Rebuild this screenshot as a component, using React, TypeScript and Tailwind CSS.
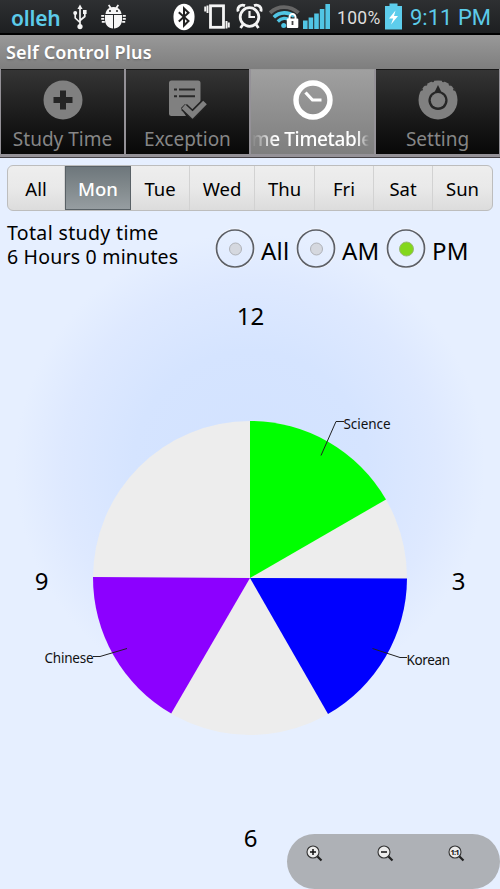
import type { ReactNode } from 'react'
import clsx from 'clsx'

/* ───────── Status bar icons ───────── */

function UsbIcon() {
  return (
    <svg width="14" height="26" viewBox="0 0 14 26" fill="none" stroke="#f4f4f4" strokeWidth="1.7">
      <path d="M7 3v19M2.200 9v5L7 18.500M11.800 8v4.500L7 16.500" />
      <path d="M7 0.500 9.600 5H4.400z" fill="#f4f4f4" stroke="none" />
      <circle cx="7" cy="22.600" r="2.600" fill="#f4f4f4" stroke="none" />
      <circle cx="2.200" cy="9" r="2" fill="#f4f4f4" stroke="none" />
      <path d="M10 6h3.600v4H10z" fill="#f4f4f4" stroke="none" />
    </svg>
  )
}

function DebugIcon() {
  return (
    <svg width="25" height="26" viewBox="0 0 25 26" fill="#f6f6f6">
      <path d="M4.500 10c.2-3 2-5.200 4-6L7 1.200 8.400.4l1.900 2.900a10 10 0 0 1 4.400 0L16.600.4l1.400.8L16.500 4c2 .8 3.800 3 4 6z" />
      <path d="M4 11h8v13.500C7.500 24 4 21 4 16zM13 11h8v5c0 5-3.500 8-8 8.500z" />
      <path d="M.2 11h3v1.800h-3zM.2 14h3v1.800h-3zM.8 17h3v1.800h-3zM21.800 11h3v1.800h-3zM21.800 14h3v1.800h-3zM21.200 17h3v1.800h-3z" />
      <circle cx="9" cy="7" r="1" fill="#222" />
      <circle cx="16" cy="7" r="1" fill="#222" />
    </svg>
  )
}

function BluetoothIcon() {
  return (
    <svg width="22" height="28" viewBox="0 0 22 28">
      <rect x=".5" y=".8" width="21" height="26.400" rx="10.500" ry="12.500" fill="#fff" />
      <path d="M5.800 9.200 15.500 18 11 22.500V5.300l4.500 4.400L5.800 18.600" fill="none" stroke="#222" strokeWidth="2" />
    </svg>
  )
}

function VibrateIcon() {
  return (
    <svg width="26" height="26" viewBox="0 0 26 26" fill="none" stroke="#f4f4f4">
      <rect x="6.500" y="1.800" width="13" height="21.500" strokeWidth="2.800" />
      <path d="M3.500 1.500V9M1.200 2.500v5M22.500 17v7.500M24.800 18.500v5" strokeWidth="1.900" />
    </svg>
  )
}

function AlarmIcon() {
  return (
    <svg width="27" height="27" viewBox="0 0 27 27" fill="none" stroke="#f4f4f4">
      <circle cx="13.500" cy="14" r="9.300" strokeWidth="2.800" />
      <path d="M13.500 8v6h5.500" strokeWidth="2.200" />
      <path d="M2.200 8.500C.8 4.500 4.500.8 9 2.600M24.800 8.500C26.200 4.500 22.500.8 18 2.600" strokeWidth="2.800" />
      <path d="M7 21.500 4.500 25M20 21.500l2.500 3.500" strokeWidth="2.800" />
    </svg>
  )
}

function WifiIcon() {
  return (
    <svg width="31" height="24" viewBox="0 0 31 24" fill="none">
      <path d="M1 7.800C9 .2 21 .2 29.500 7.800" stroke="#666" strokeWidth="3.800" />
      <path d="M4.800 12.200c6-5.600 14.500-5.600 20.500-1" stroke="#51c5e4" strokeWidth="3.600" />
      <path d="M8.800 16.500c4-3.800 8.500-3.800 11-1.800" stroke="#51c5e4" strokeWidth="3.400" />
      <circle cx="14.700" cy="20.500" r="2.500" fill="#51c5e4" />
      <path d="M20.500 14.500v-2.200a3 3.300 0 0 1 6 0v2.200" stroke="#fff" strokeWidth="2" />
      <rect x="17.800" y="13.500" width="11.500" height="9.500" rx="1" fill="#fff" />
      <path d="M23.500 16v4" stroke="#444" strokeWidth="1.800" />
    </svg>
  )
}

function SignalIcon() {
  return (
    <svg width="27" height="27" viewBox="0 0 27 27" fill="#51c5e4">
      <path d="M0 17.500h4.600V26H0zM5.600 14.500h4.600V26H5.600zM11.200 10.500h4.600V26h-4.600zM16.800 6h4.600v20h-4.600zM22.400 1H27v25h-4.600z" />
    </svg>
  )
}

function BatteryIcon() {
  return (
    <svg width="17" height="27" viewBox="0 0 17 27">
      <path d="M4.500.5h8V3H17v23.500H0V3h4.500z" fill="#5dcdec" />
      <path d="M10.500 7.500 4 15.500h4.200L6 21.500l7-8.500H9z" fill="#fff" />
    </svg>
  )
}

/* ───────── Tab icons ───────── */

function PlusIcon() {
  return (
    <svg width="40" height="40" viewBox="0 0 40 40">
      <circle cx="20" cy="20" r="19.500" fill="#808080" />
      <path d="M17 10.500h6V17h6.500v6H23v6.500h-6V23h-6.500v-6H17z" fill="#252525" />
    </svg>
  )
}

function ExceptionIcon() {
  return (
    <svg width="40" height="40" viewBox="0 0 40 40">
      <path d="M3.500.5h26.500a2.500 2.500 0 0 1 2.500 2.500v20L24 31l-7-7-4 4 5 8H3.500A2.500 2.500 0 0 1 1 33.500V3A2.500 2.500 0 0 1 3.500.5z" fill="#808080" />
      <path d="M6 9.500h3M11 9.500h16M6 16.300h3M11 16.300h16" stroke="#292929" strokeWidth="2" />
      <path d="m16 27 8.500 8L37 22.500" fill="none" stroke="#222" strokeWidth="8.400" strokeLinejoin="round" />
      <path d="m15.500 26.500 9 8.500L37 22.500" fill="none" stroke="#808080" strokeWidth="5.200" />
    </svg>
  )
}

function ClockIcon() {
  return (
    <svg width="40" height="40" viewBox="0 0 40 40" fill="none" stroke="#fff">
      <circle cx="20" cy="20" r="17" strokeWidth="5.400" />
      <path d="m12.500 12.500 7 7.500h9" strokeWidth="3.200" />
    </svg>
  )
}

function SettingIcon() {
  return (
    <svg width="40" height="40" viewBox="0 0 40 40">
      <circle cx="20" cy="20" r="19.500" fill="#808080" />
      {/* notches along the top of the dial */}
      <g fill="#303030">
        <circle cx="3.600" cy="9.500" r="1.300" />
        <circle cx="8" cy="4.500" r="1.300" />
        <circle cx="14.800" cy="1" r="1.300" />
        <circle cx="25.200" cy="1" r="1.300" />
        <circle cx="32" cy="4.500" r="1.300" />
        <circle cx="36.400" cy="9.500" r="1.300" />
      </g>
      <path d="M20 5 23.200 11.400a9.600 9.600 0 1 1-6.400 0z" fill="#262626" />
      <circle cx="20" cy="20.300" r="7.200" fill="#808080" />
    </svg>
  )
}

/* ───────── Data ───────── */

const tabs: { label: string; icon: ReactNode; active?: boolean }[] = [
  { label: 'Study Time', icon: <PlusIcon /> },
  { label: 'Exception', icon: <ExceptionIcon /> },
  { label: 'me Timetable', icon: <ClockIcon />, active: true },
  { label: 'Setting', icon: <SettingIcon /> },
]

const days = [
  { label: 'All', width: 'w-[57px]' },
  { label: 'Mon', width: 'w-[66px]' },
  { label: 'Tue', width: 'w-[59px]' },
  { label: 'Wed', width: 'w-[65px]' },
  { label: 'Thu', width: 'w-[60px]' },
  { label: 'Fri', width: 'w-[59px]' },
  { label: 'Sat', width: 'w-[59px]' },
  { label: 'Sun', width: 'w-[59px]' },
]

const periods = [
  { label: 'All', width: 'w-[81px]' },
  { label: 'AM', width: 'w-[90px]' },
  { label: 'PM', width: 'w-[90px]' },
]

/* ───────── Sections ───────── */

function StatusBar() {
  return (
    <div className="flex h-[35px] items-center border-b-2 border-black bg-linear-to-b from-[#2e3032] to-[#1d1f21] pl-[11px] font-[Roboto,sans-serif]">
      <span className="w-[62px] pt-[2px] font-['Noto_Sans',sans-serif] text-[21px] leading-[28px] font-semibold tracking-[-0.2px] text-[#5ccbe9]">
        olleh
      </span>
      <UsbIcon />
      <span className="ml-[14px] w-[72px]">
        <DebugIcon />
      </span>
      <BluetoothIcon />
      <span className="ml-[9px]">
        <VibrateIcon />
      </span>
      <span className="ml-[6px]">
        <AlarmIcon />
      </span>
      <span className="ml-[6px]">
        <WifiIcon />
      </span>
      <span className="ml-[3px]">
        <SignalIcon />
      </span>
      <span className="ml-[7px] w-[48px] pt-[3px] text-[17.5px] tracking-[0.3px] text-[#dedede]">100%</span>
      <BatteryIcon />
      <span className="ml-[8px] pt-[3px] text-[22px] leading-[28px] whitespace-nowrap text-[#5ccbe9]">9:11 PM</span>
    </div>
  )
}

function TabBar() {
  return (
    <nav className="flex h-[89px] gap-[2px] border-b border-[#454247] bg-[#949197] px-px pb-[3px]">
      {tabs.map((tab) => (
        <div
          key={tab.label}
          className={clsx(
            'flex min-w-0 flex-1 flex-col items-center border-t pt-[10px]',
            tab.active
              ? 'border-[#9b9b9b] bg-linear-to-b from-[#a0a0a0] to-[#7e7e7e] text-white'
              : 'border-[#171717] bg-linear-to-b from-[#353535] to-[#080808] text-[#868686]',
          )}
        >
          {tab.icon}
          <span
            className={clsx(
              'mt-[5px] leading-[29px] whitespace-nowrap',
              tab.active
                ? 'mr-[5px] w-[117px] mask-l-from-80% mask-r-from-90% text-[19px] font-medium tracking-[-0.35px]'
                : 'text-[19px]',
            )}
          >
            {tab.label}
          </span>
        </div>
      ))}
    </nav>
  )
}

function DayPicker() {
  return (
    <div className="mx-[7px] mt-[7px] flex h-[46px] overflow-hidden rounded-[6px] border border-[#bdbdbd] bg-linear-to-b from-[#eeeeee] via-[#e9e9e9] to-[#dcdcdc]">
      {days.map((day) => (
        <button
          key={day.label}
          className={clsx(
            'flex shrink-0 items-center justify-center pt-[2px] text-[18.5px]',
            day.width,
            day.label === 'Mon'
              ? 'border border-[#596166] bg-linear-to-b from-[#6e777c] via-[#828a8d] to-[#969da1] font-medium text-white'
              : 'border-r border-[#d2d2d2] text-black last:border-r-0',
          )}
        >
          {day.label}
        </button>
      ))}
    </div>
  )
}

function PeriodRadio({ label, width, checked }: { label: string; width: string; checked: boolean }) {
  return (
    <label className={clsx('flex items-center gap-[6px]', width)}>
      <svg width="40" height="40" viewBox="0 0 40 40" className="shrink-0">
        <circle cx="20" cy="20.500" r="19.200" fill="none" stroke="#f8faff" strokeWidth="1.600" />
        <circle cx="20" cy="20.500" r="18.500" fill="none" stroke="#5d6067" strokeWidth="1.700" />
        <circle
          cx="20.500"
          cy="21"
          r={checked ? 7 : 6}
          fill={checked ? '#83d71c' : '#d5d8df'}
          stroke={checked ? '#9ab978' : '#afb2b8'}
          strokeWidth="1"
        />
      </svg>
      <span className="pt-[7px] text-[24px] leading-[32px] tracking-[0.2px]">{label}</span>
    </label>
  )
}

/* 12-hour clock face: one wedge per study block */
function ClockChart() {
  return (
    <svg width="500" height="606" viewBox="0 283 500 606" className="block">
      <circle cx="250" cy="578" r="157" fill="#ededed" />
      <path d="M250 578V421a157 157 0 0 1 136 78.500z" fill="#00ff00" />
      <path d="M250 578l157 .5a157 157 0 0 1-79 135.500z" fill="#0000ff" />
      <path d="M250 578 171.200 713.500A157 157 0 0 1 93 577z" fill="#8c00ff" />
      <g fill="none" stroke="#222" strokeWidth="1">
        <path d="m321 455.500 15-34h8" />
        <path d="m372.500 648.500 27.500 9h7" />
        <path d="m127 648.500-27 8h-7" />
      </g>
      <g fontSize="13.500" fill="#111">
        <text x="343.500" y="428.500" textLength="47">Science</text>
        <text x="406.500" y="664.500" textLength="43.500">Korean</text>
        <text x="44.500" y="663" textLength="49">Chinese</text>
      </g>
      <g fontSize="24" textAnchor="middle">
        <text x="250.500" y="325">12</text>
        <text x="458.500" y="589.500">3</text>
        <text x="250.500" y="847">6</text>
        <text x="41.500" y="589.500">9</text>
      </g>
    </svg>
  )
}

function ZoomIcon({ kind }: { kind: 'in' | 'out' | 'reset' }) {
  return (
    <svg width="17" height="17" viewBox="0 0 17 17" fill="none">
      <path d="m10.500 10.500 5 5" stroke="#222" strokeWidth="2.200" />
      <circle cx="7" cy="7" r="6" fill="#ececec" stroke="#333" strokeWidth="1.100" />
      {kind !== 'reset' && <path d="M4 7h6" stroke="#111" strokeWidth="1.500" />}
      {kind === 'in' && <path d="M7 4v6" stroke="#111" strokeWidth="1.500" />}
      {kind === 'reset' && (
        <text x="7" y="9.700" fontSize="7.500" fontWeight="700" textAnchor="middle" fill="#111" textLength="9">
          1:1
        </text>
      )}
    </svg>
  )
}

export default function App() {
  return (
    <div className="relative flex h-[889px] w-[500px] flex-col overflow-hidden bg-[#e6efff] font-['Noto_Sans',sans-serif] text-black">
      <StatusBar />
      <header className="flex h-[34px] items-center bg-linear-to-b from-[#999999] to-[#7e7e7e] pl-[6px] text-[18px] font-semibold tracking-[0.15px] text-white text-shadow-sm">
        Self Control Plus
      </header>
      <TabBar />

      <main className="h-[731px] bg-[radial-gradient(circle_235px_at_250px_310px,#d2e2ff_0%,#d5e4ff_50%,#dee9ff_80%,#e6efff_100%)]">
        <DayPicker />
        <div className="flex h-[72px] pl-[7px]">
          <div className="flex w-[208px] flex-col pt-[10px] text-[19.5px] leading-[24px] whitespace-nowrap">
            <span className="h-[24px] tracking-[0.35px]">Total study time</span>
            <span className="h-[24px] tracking-[0.2px]">6 Hours 0 minutes</span>
          </div>
          <div className="flex pt-px">
            {periods.map((period) => (
              <PeriodRadio key={period.label} {...period} checked={period.label === 'PM'} />
            ))}
          </div>
        </div>
        <ClockChart />
      </main>

      {/* Floating zoom controls */}
      <div className="absolute right-0 bottom-0 flex h-[55px] w-[213px] gap-[54px] rounded-[28px] bg-[#aeb1b6] pt-[11px] pl-[19px]">
        <ZoomIcon kind="in" />
        <ZoomIcon kind="out" />
        <ZoomIcon kind="reset" />
      </div>
    </div>
  )
}
